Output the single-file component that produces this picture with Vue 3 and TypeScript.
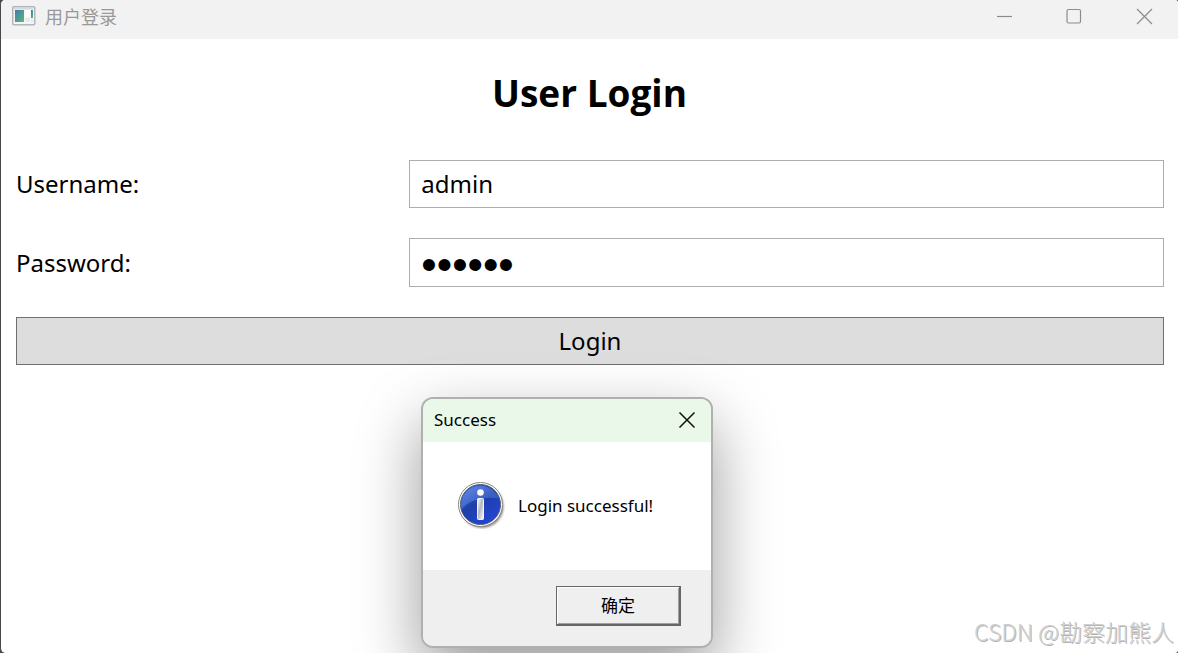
<script setup lang="ts">
import { ref } from 'vue'

const username = ref('admin')
const password = ref('123456')
const dialogOpen = ref(true)

function login(): void {
  dialogOpen.value = true
}

function closeDialog(): void {
  dialogOpen.value = false
}
</script>

<template>
  <div class="window">
    <header class="titlebar">
      <svg class="app-icon" viewBox="0 0 24 20" aria-hidden="true">
        <defs>
          <linearGradient id="pane" x1="0" y1="0" x2="1" y2="1">
            <stop offset="0" stop-color="#4079ad" />
            <stop offset="1" stop-color="#5fb878" />
          </linearGradient>
        </defs>
        <rect x="0.75" y="0.75" width="22" height="18" rx="1" fill="#f4f5f6" stroke="#b0b6bc" stroke-width="1.5" />
        <rect x="2" y="2" width="19.500" height="1.500" fill="#d5dade" />
        <rect x="3" y="4" width="9" height="12" fill="url(#pane)" />
        <rect x="13.500" y="4" width="4" height="7" fill="#fff" />
        <rect x="13.500" y="12" width="4" height="4" fill="#e6e8ea" />
        <rect x="19" y="4" width="2" height="8" fill="url(#pane)" />
        <rect x="19" y="13" width="2" height="3" fill="#e6e8ea" />
      </svg>
      <span class="caption">用户登录</span>
      <div class="window-controls">
        <button type="button" aria-label="Minimize">
          <svg viewBox="0 0 16 16"><path d="M1 8.500H16" /></svg>
        </button>
        <button type="button" aria-label="Maximize">
          <svg viewBox="0 0 16 16"><rect x="1" y="1.500" width="13.500" height="13.500" rx="1.500" /></svg>
        </button>
        <button type="button" aria-label="Close">
          <svg viewBox="0 0 16 16"><path d="M1 1L16 16M16 1L1 16" /></svg>
        </button>
      </div>
    </header>

    <main class="content">
      <h1>User Login</h1>
      <form @submit.prevent="login">
        <div class="row">
          <label for="username">Username:</label>
          <input id="username" v-model="username" type="text" autocomplete="off" />
        </div>
        <div class="row">
          <label for="password">Password:</label>
          <input id="password" v-model="password" type="password" autocomplete="off" />
        </div>
        <button class="login" type="submit">Login</button>
      </form>
    </main>

    <section v-if="dialogOpen" class="dialog" role="dialog" aria-labelledby="dialog-title">
      <header class="dialog-header">
        <h2 id="dialog-title">Success</h2>
        <button type="button" class="dialog-close" aria-label="Close dialog" @click="closeDialog">
          <svg viewBox="0 0 16 16"><path d="M0.500 0.500L15.500 15.500M15.500 0.500L0.500 15.500" /></svg>
        </button>
      </header>
      <div class="dialog-body">
        <svg class="info-icon" viewBox="0 0 48 48" aria-hidden="true">
          <defs>
            <linearGradient id="ball" x1="0" y1="0" x2="0.700" y2="1">
              <stop offset="0" stop-color="#3f6fe0" />
              <stop offset="0.500" stop-color="#1c40a8" />
              <stop offset="1" stop-color="#2444d8" />
            </linearGradient>
            <linearGradient id="gloss" x1="0" y1="0" x2="1" y2="1">
              <stop offset="0" stop-color="#7aa2f4" />
              <stop offset="1" stop-color="#2f57c0" />
            </linearGradient>
            <linearGradient id="stem" x1="0" y1="0" x2="1" y2="1">
              <stop offset="0" stop-color="#fff" />
              <stop offset="0.450" stop-color="#b4b7be" />
              <stop offset="1" stop-color="#fff" />
            </linearGradient>
            <filter id="soft" x="-20%" y="-20%" width="140%" height="140%">
              <feGaussianBlur stdDeviation="1" />
            </filter>
          </defs>
          <circle cx="25" cy="25.500" r="21.500" fill="#555" opacity="0.700" filter="url(#soft)" />
          <circle cx="23.500" cy="23.500" r="22" fill="#fff" stroke="#858585" />
          <circle cx="23.500" cy="23.500" r="20" fill="url(#ball)" stroke="#555c70" />
          <path d="M4.500 28.500A19.500 19.500 0 0 1 39.500 13Q41.500 15 42 17.500C28 15.500 13 18 4.500 28.500Z" fill="url(#gloss)" opacity="0.600" />
          <circle cx="23.500" cy="11.500" r="3.300" fill="#fff" />
          <rect x="20.500" y="17.500" width="6" height="21" rx="0.800" fill="url(#stem)" stroke="#f5f5f8" />
        </svg>
        <p>Login successful!</p>
      </div>
      <footer class="dialog-footer">
        <button type="button" class="confirm" @click="closeDialog">确定</button>
      </footer>
    </section>

    <span class="watermark">CSDN @勘察加熊人</span>
  </div>
</template>

<style>
body {
  margin: 0;
  background: #48484a;
}
</style>

<style scoped>
.window {
  position: relative;
  box-sizing: border-box;
  min-height: 100vh;
  overflow: hidden;
  border-left: 1px solid #48484a;
  border-radius: 5px 3px 3px 5px;
  background: #fff;
  color: #000;
  font-family: "Noto Sans", "Noto Sans CJK SC", sans-serif;
}

button {
  font-family: inherit;
  color: inherit;
}

.titlebar {
  display: flex;
  align-items: flex-start;
  height: 39px;
  padding-left: 11px;
  background: #f2f2f2;
}

.app-icon {
  width: 24px;
  height: 20px;
  margin-top: 6px;
}

.caption {
  margin-left: 9px;
  color: #999;
  font-family: "Noto Sans CJK SC", sans-serif;
  font-size: 18px;
  line-height: 32px;
}

.window-controls {
  display: flex;
  margin-left: auto;
}

.window-controls button {
  display: flex;
  align-items: center;
  justify-content: center;
  width: 70px;
  height: 32px;
  padding: 0 0 0 2px;
  border: 0;
  background: none;
}

.window-controls svg,
.dialog-close svg {
  width: 16px;
  height: 16px;
  overflow: visible;
  fill: none;
  stroke: #8c8c8c;
  stroke-width: 1.2;
}

h1 {
  margin: 0;
  padding: 24px 0 38px;
  font-family: "Open Sans", sans-serif;
  font-size: 37px;
  font-weight: 700;
  line-height: 59px;
  text-align: center;
}

form {
  display: grid;
  gap: 30px;
}

.row {
  display: grid;
  grid-template-columns: 1fr 2fr;
  align-items: center;
}

label {
  margin-left: 15px;
  font-size: 24px;
  line-height: 36px;
}

input {
  box-sizing: border-box;
  min-width: 0;
  height: 48px;
  margin: 0 14px 0 16px;
  padding: 0 11px 2px;
  border: 1px solid #abadb3;
  border-radius: 0;
  outline: 0;
  background: #fff;
  color: #000;
  font-family: "Noto Sans", sans-serif;
  font-size: 24px;
}

input[type="password"] {
  height: 49px;
  padding: 4px 11px 0;
  font-family: "Liberation Sans", sans-serif;
  font-size: 44px;
}

.login {
  height: 48px;
  margin: 0 14px 0 15px;
  padding: 0 0 2px;
  border: 1px solid #707070;
  border-radius: 0;
  background: #ddd;
  font-size: 24px;
}

.dialog {
  position: absolute;
  top: 397px;
  left: 420px;
  box-sizing: border-box;
  width: 292px;
  overflow: hidden;
  border: 2px solid #b0b0b0;
  border-radius: 12px;
  background: #fff;
  box-shadow: 0 26px 64px rgba(0, 0, 0, 0.4);
}

.dialog-header {
  display: flex;
  align-items: center;
  justify-content: space-between;
  box-sizing: border-box;
  height: 43px;
  padding: 0 16px 2px 11px;
  background: #e9f8e9;
}

h2 {
  margin: 0;
  font-size: 17px;
  font-weight: 400;
}

.dialog-close {
  display: flex;
  padding: 0;
  border: 0;
  background: none;
}

.dialog-close svg {
  stroke: #111;
  stroke-width: 1.5;
}

.dialog-body {
  display: flex;
  align-items: center;
  gap: 13px;
  box-sizing: border-box;
  height: 128px;
  padding: 0 0 2px 34px;
}

.info-icon {
  width: 48px;
  height: 48px;
}

.dialog-body p {
  margin: 0;
  font-size: 17px;
}

.dialog-footer {
  display: flex;
  justify-content: flex-end;
  padding: 16px 30px 20px;
  background: #efefef;
}

.confirm {
  box-sizing: border-box;
  width: 125px;
  height: 40px;
  padding: 0 0 2px;
  border: solid #666;
  border-width: 1px 2px 2px 1px;
  border-radius: 0;
  background: #efefef;
  box-shadow: inset 1px 1px #fff, inset -1px -1px #a0a0a0;
  font-family: "Noto Sans CJK SC", sans-serif;
  font-size: 17px;
}

.watermark {
  position: absolute;
  right: 4px;
  bottom: 4px;
  color: #d0d0d0;
  font-family: "Noto Sans CJK SC", sans-serif;
  font-size: 23px;
  font-weight: 300;
  line-height: 36px;
  text-shadow: 1px 1px #b4b4b4;
}
</style>
